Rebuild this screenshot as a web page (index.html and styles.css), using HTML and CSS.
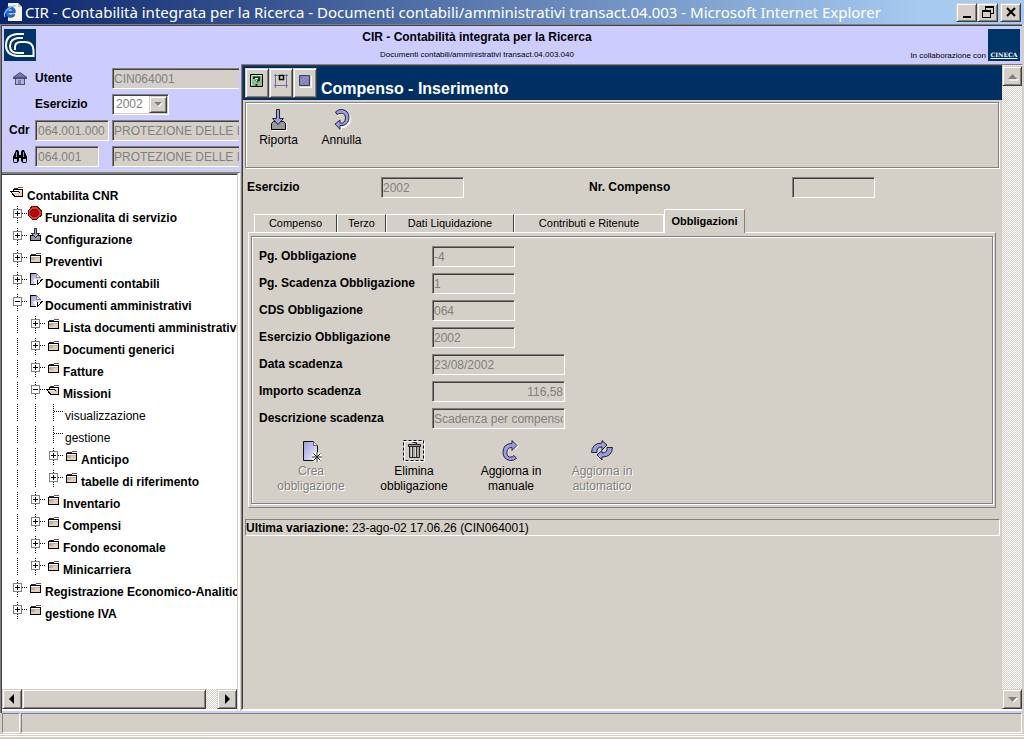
FILE: index.html
```html
<!DOCTYPE html>
<html lang="it">
<head>
<meta charset="utf-8">
<title>CIR - Contabilità integrata per la Ricerca</title>
<link rel="stylesheet" href="styles.css">
</head>
<body>
<svg class="defs" aria-hidden="true">
  <defs>
    <linearGradient id="sheet" x1="0" y1="0" x2="1" y2="1"><stop offset="0" stop-color="#9a9ade"/><stop offset="1" stop-color="#f4f4ff"/></linearGradient>
    <symbol id="line" viewBox="0 0 18 22"><path d="M8.500 0v17" stroke="#000" stroke-dasharray="1 1"/></symbol>
    <symbol id="leaf" viewBox="0 0 18 22"><path d="M8.500 0v17M9 7.500h9" stroke="#000" stroke-dasharray="1 1"/></symbol>
    <symbol id="plus" viewBox="0 0 18 22"><path d="M8.500 0v17M13 7.500h5" stroke="#000" stroke-dasharray="1 1"/><path d="M4.500 3.500h8v8h-8z" fill="#fff" stroke="#808080"/><path d="M6 7.500h5M8.500 5v5" stroke="#000"/></symbol>
    <symbol id="minus" viewBox="0 0 18 22"><path d="M8.500 0v17M13 7.500h5" stroke="#000" stroke-dasharray="1 1"/><path d="M4.500 3.500h8v8h-8z" fill="#fff" stroke="#808080"/><path d="M6 7.500h5" stroke="#000"/></symbol>
    <symbol id="folder" viewBox="0 0 18 22"><path d="M3 5h11v8H3z" fill="#000"/><path d="M4 6h9v6H4z" fill="#e8cdb4"/><path d="M4 8h4v2H4zM4 7h9v1H4z" fill="#b8b0a8"/><path d="M4 6h9v1H4zM9 4h5v1H9z" fill="#fff"/><path d="M4 4h5v1H4z" fill="#303030"/><path d="M9 3h5v1H9z" fill="#804848"/></symbol>
    <symbol id="open" viewBox="0 0 18 22"><path d="M4 5h10v8H5L1 7h3z" fill="#000"/><path d="M3 8h7l3 4H6zM5 6h8v5h-1l-2-4H5z" fill="#e8cdb4"/><path d="M3 8h6v1H4zM5 6h8v1H5z" fill="#fff"/><path d="M5 4h4v1H5z" fill="#303030"/><path d="M9 3h5v1H9z" fill="#804848"/></symbol>
    <symbol id="stop" viewBox="0 0 18 22"><path d="M5 .5h5l4 4v5l-4 3.500H5L1.500 9.500v-5z" fill="#d84040" stroke="#601010"/><path d="M5.500 3.500h4l2 2v3l-2 2h-4l-2-2v-3z" fill="#b80808" stroke="#900"/></symbol>
    <symbol id="config" viewBox="0 0 18 22"><path d="M3.500 7.500h10v5h-10z" fill="#999" stroke="#000"/><path d="M7.500.5h2v5h3l-4 4-4-4h3z" fill="#a4a4e4" stroke="#334"/></symbol>
    <symbol id="doc" viewBox="0 0 18 22"><path d="M3.500 1.500h6l4 4v7h-10z" fill="url(#sheet)"/><path d="M10 1.500H3.500v11H10" fill="none" stroke="#000"/><path d="M9.500 1.500v4h4z" fill="#fff" stroke="#888"/><path d="M7.500 7.500l3 4.500M16 6l-5.500 6.500" fill="none" stroke="#fff" stroke-width="3"/><path d="M10.500 7.500v5l5-5.500" fill="none" stroke="#000"/></symbol>
  </defs>
</svg>
<div class="window">
  <header class="titlebar">
    <svg class="ie" width="20" height="20" viewBox="0 0 20 20"><path d="M5 1h10l4 4v14H5z" fill="#f4f4e8"/><path d="M15 1v4h4" fill="#c8c8b8"/><path d="M2.500 10a5 4.500 0 1 1 9.500 1H5q1 3 4 1.500h3Q11 16 7 15.500 2.500 15 2.500 10M5 9h4.500Q9 7 7.200 7T5 9" fill="#2468d8" stroke="#0a3c9c" stroke-width=".5"/><path d="M2 15Q0 11 5 7t8-3" fill="none" stroke="#7cc4f8" stroke-width="1.200"/></svg>
    <span class="title">CIR - Contabilità integrata per la Ricerca - Documenti contabili/amministrativi transact.04.003 - Microsoft Internet Explorer</span>
    <button class="raised ctl" aria-label="Riduci a icona"><svg width="16" height="14"><path d="M4 11h8v2H4z"/></svg></button>
    <button class="raised ctl" aria-label="Ripristina"><svg width="16" height="14"><path d="M5 1h9v8h-3V8h2V3H6v2H5zM2 5h9v8H2zM3 7v5h7V7z" fill-rule="evenodd"/></svg></button>
    <button class="raised ctl close" aria-label="Chiudi"><svg width="16" height="14"><path d="M4 3l8 8M12 3l-8 8" stroke="#000" stroke-width="2"/></svg></button>
  </header>
  <div class="client">
    <div class="banner">
      <svg width="32" height="32" viewBox="0 0 32 32"><path fill="#036" d="M0 0h32v32H0z"/><g fill="none" stroke="#fff" stroke-width="2"><path d="M20 5h-7Q2 6 2 16t11 11h17"/><path d="M19 9h-5Q6 10 6 17t8 7h6"/><path d="M11 21v-3q0-5 6-5h4q8 0 8.500 8v7"/></g></svg>
      <div class="banner-text"><strong>CIR - Contabilità integrata per la Ricerca</strong><small>Documenti contabili/amministrativi transact.04.003.040</small></div>
      <div class="partner"><small>In collaborazione con</small><span class="cineca">CINECA</span></div>
    </div>
    <div class="frames">
      <aside class="side">
        <form class="user">
          <button type="button" class="mini" aria-label="Home"><svg width="16" height="16" viewBox="0 0 16 16"><path d="M8 1l7 5v2h-2v6H3V8H1V6z" fill="#505078"/><path d="M8 2l5 4H3z" fill="#7878b0"/><path d="M4 8h8v5H4z" fill="#b0b0dc"/><path d="M6 9h3v4H6z" fill="#8080b0"/></svg></button>
          <label for="utente">Utente</label><input id="utente" value="CIN064001" disabled>
          <label class="second" for="anno">Esercizio</label>
          <span class="combo"><select id="anno" disabled><option>2002</option></select><svg class="raised" width="18" height="17"><path d="M5 6h8l-4 4z" fill="#fff"/><path d="M4 5h8L8 9z" fill="#808080"/></svg></span>
          <label for="cdr">Cdr</label><input id="cdr" class="code" value="064.001.000" disabled><input aria-label="Descrizione Cdr" value="PROTEZIONE DELLE I" disabled>
          <button type="button" class="mini" aria-label="Cerca"><svg width="16" height="16" viewBox="0 0 16 16"><path d="M4 1h2l1 2v3h2V3l1-2h2l3 7v4l-1 2h-3l-2-2V9H7v3l-2 2H2l-1-2V8z" fill="#000"/><path d="M2 10h3v3H2zM11 10h3v3h-3z" fill="#c8c8e8"/><path d="M4.500 3v5M11.500 3v5" stroke="#999"/></svg></button>
          <input class="short" aria-label="Unità" value="064.001" disabled><input aria-label="Descrizione unità" value="PROTEZIONE DELLE I" disabled>
        </form>
        <nav class="tree-frame">
          <ul class="tree">
            <li><svg><use href="#open"/></svg><a href="#">Contabilita CNR</a></li>
            <li><svg><use href="#plus"/></svg><svg><use href="#stop"/></svg><a href="#">Funzionalita di servizio</a></li>
            <li><svg><use href="#plus"/></svg><svg><use href="#config"/></svg><a href="#">Configurazione</a></li>
            <li><svg><use href="#plus"/></svg><svg><use href="#folder"/></svg><a href="#">Preventivi</a></li>
            <li><svg><use href="#plus"/></svg><svg><use href="#doc"/></svg><a href="#">Documenti contabili</a></li>
            <li><svg><use href="#minus"/></svg><svg><use href="#doc"/></svg><a href="#">Documenti amministrativi</a></li>
            <li><svg><use href="#line"/></svg><svg><use href="#plus"/></svg><svg><use href="#folder"/></svg><a href="#">Lista documenti amministrativi</a></li>
            <li><svg><use href="#line"/></svg><svg><use href="#plus"/></svg><svg><use href="#folder"/></svg><a href="#">Documenti generici</a></li>
            <li><svg><use href="#line"/></svg><svg><use href="#plus"/></svg><svg><use href="#folder"/></svg><a href="#">Fatture</a></li>
            <li><svg><use href="#line"/></svg><svg><use href="#minus"/></svg><svg><use href="#open"/></svg><a href="#">Missioni</a></li>
            <li><svg><use href="#line"/></svg><svg><use href="#line"/></svg><svg><use href="#leaf"/></svg><a class="leaf" href="#">visualizzazione</a></li>
            <li><svg><use href="#line"/></svg><svg><use href="#line"/></svg><svg><use href="#leaf"/></svg><a class="leaf" href="#">gestione</a></li>
            <li><svg><use href="#line"/></svg><svg><use href="#line"/></svg><svg><use href="#plus"/></svg><svg><use href="#folder"/></svg><a href="#">Anticipo</a></li>
            <li><svg><use href="#line"/></svg><svg><use href="#line"/></svg><svg><use href="#plus"/></svg><svg><use href="#folder"/></svg><a href="#">tabelle di riferimento</a></li>
            <li><svg><use href="#line"/></svg><svg><use href="#plus"/></svg><svg><use href="#folder"/></svg><a href="#">Inventario</a></li>
            <li><svg><use href="#line"/></svg><svg><use href="#plus"/></svg><svg><use href="#folder"/></svg><a href="#">Compensi</a></li>
            <li><svg><use href="#line"/></svg><svg><use href="#plus"/></svg><svg><use href="#folder"/></svg><a href="#">Fondo economale</a></li>
            <li><svg><use href="#line"/></svg><svg><use href="#plus"/></svg><svg><use href="#folder"/></svg><a href="#">Minicarriera</a></li>
            <li><svg><use href="#plus"/></svg><svg><use href="#folder"/></svg><a href="#">Registrazione Economico-Analitica</a></li>
            <li><svg><use href="#plus"/></svg><svg><use href="#folder"/></svg><a href="#">gestione IVA</a></li>
          </ul>
          <div class="hscroll">
            <button class="raised" aria-label="Scorri a sinistra"><svg width="14" height="14"><path d="M9 2v10L4 7z"/></svg></button>
            <span class="raised thumb"></span>
            <button class="raised" aria-label="Scorri a destra"><svg width="14" height="14"><path d="M5 2v10l5-5z"/></svg></button>
          </div>
        </nav>
      </aside>
      <main class="main">
        <div class="page">
          <div class="page-head">
            <button class="raised" aria-label="Guida"><svg width="16" height="16"><path d="M1.500 1.500h12v12h-12z" fill="#8cbc8c" stroke="#000"/><path d="M3 2.500h10M2.500 3v10" stroke="#c8ecc8"/><path d="M5 6V4.500h5V7L7.500 8v2M7.500 11v2" fill="none" stroke="#163c16" stroke-width="2"/><path d="M6 5.500h3M8 7l-1 1v2" fill="none" stroke="#fff"/></svg></button>
            <button class="raised" aria-label="Layout"><svg width="16" height="16"><path d="M1 2.500h14M1 12.500h14M2.500 1v14M13.500 1v14" stroke="#7070a8"/><path d="M6.500 2.500h4v4h-4z" fill="#ddd" stroke="#000" stroke-width="1.500"/></svg></button>
            <button class="raised" aria-label="Finestra"><svg width="16" height="16"><path d="M2.500 2.500h10v10h-10z" fill="#8080b8" stroke="#404070"/><path d="M4 8l4-4M4 11l7-7M8 11l3-3" stroke="#a8a8d8"/><path d="M14.500 3v11.500H3" stroke="#fff" fill="none"/></svg></button>
            <h1>Compenso - Inserimento</h1>
          </div>
          <div class="toolbar etched">
            <button class="tool"><svg width="22" height="24" viewBox="0 0 22 24"><path d="M3.500 15.500l2-2h10l2 2v6h-14z" fill="#999" stroke="#000"/><path d="M4 22.500h14.500V15" fill="none" stroke="#fff"/><path d="M8.500 1.500h3v9h4l-5.500 6-5.500-6h4z" fill="#a0a0dc" stroke="#223"/></svg>Riporta</button>
            <button class="tool"><svg width="22" height="24" viewBox="0 0 22 24"><path d="M4.500 4.500q3-3 7-2.500 7 1.500 7 8T12 18.500H9v3.500l-5-5.500 5-4v3.500h3q3.500-.5 3.500-5.500t-4-5Q8 5 6 6.500z" fill="#fff" stroke="#fff" transform="translate(1 1)"/><path d="M4.500 4q3-3 7-2.500 6.500 1.500 6.500 8T12 17.500H9v4l-5-5.500 5-4v3h2.500q3-.5 3-5t-4-4.500Q8 5 6 6.500z" fill="#9c9cd8" stroke="#224"/></svg>Annulla</button>
          </div>
          <div class="keys">
            <label for="ese">Esercizio</label><input id="ese" value="2002" disabled>
            <label for="nr">Nr. Compenso</label><input id="nr" disabled>
          </div>
          <div class="tabs" role="tablist">
            <button role="tab" class="t-compenso">Compenso</button><button role="tab" class="t-terzo">Terzo</button><button role="tab" class="t-dati">Dati Liquidazione</button><button role="tab" class="t-contributi">Contributi e Ritenute</button><button role="tab" class="active" aria-selected="true">Obbligazioni</button>
          </div>
          <section class="panel">
            <div class="etched inner">
              <div class="fields">
                <label for="f1">Pg. Obbligazione</label><input id="f1" value="-4" disabled>
                <label for="f2">Pg. Scadenza Obbligazione</label><input id="f2" value="1" disabled>
                <label for="f3">CDS Obbligazione</label><input id="f3" value="064" disabled>
                <label for="f4">Esercizio Obbligazione</label><input id="f4" value="2002" disabled>
                <label for="f5">Data scadenza</label><input id="f5" class="wide" value="23/08/2002" disabled>
                <label for="f6">Importo scadenza</label><input id="f6" class="wide num" value="116,58" disabled>
                <label for="f7">Descrizione scadenza</label><input id="f7" class="wide" value="Scadenza per compenso" disabled>
              </div>
              <div class="actions">
                <button class="tool" disabled><svg width="22" height="24" viewBox="0 0 22 24"><path d="M3.500 2.500h10l4 4v15h-14z" fill="url(#sheet)" stroke="#111"/><path d="M13.500 2.500v4h4" fill="#fff" stroke="#666"/><path d="M17 13v10M12 18h10M13.500 14.500l7 7M20.500 14.500l-7 7" stroke="#fff" stroke-width="3"/><path d="M17 13v10M12 18h10M13.500 14.500l7 7M20.500 14.500l-7 7" stroke="#222"/></svg>Crea obbligazione</button>
                <button class="tool"><svg width="22" height="24" viewBox="0 0 22 24"><path d="M1.500 2.500h20v20h-20z" fill="none" stroke="#fff"/><path d="M.5 1.500h20v20H.5z" fill="none" stroke="#000" stroke-dasharray="3 2"/><path d="M6.500 7.500h10v11h-10z" fill="#aaa" stroke="#222"/><path d="M9.500 8v10M13.500 8v10" stroke="#333"/><path d="M8.500 8v10M12.500 8v10" stroke="#ddd"/><path d="M5.500 5.500h12v2h-12zM9.500 3.500h4v2" fill="#999" stroke="#222"/></svg>Elimina obbligazione</button>
                <button class="tool"><svg width="22" height="24" viewBox="0 0 22 24"><path d="M16 20q-3 3-7 2-6-2-6-8Q3 5 12 5V2l6 5-6 5V9q-5 0-5 5t5 4h3z" fill="#fff" transform="translate(1 0)"/><path d="M16.500 19.500q-3 2.500-7 2-6.500-2-6.500-8Q3 4.500 12 4.500V1.500l5 5-5 5v-3q-5 0-5 5t4 4.500q2 0 3-1.500z" fill="#9c9cd8" stroke="#224"/></svg>Aggiorna in manuale</button>
                <button class="tool" disabled><svg width="22" height="24" viewBox="0 0 22 24"><g fill="#9c9cd8" stroke="#224"><path d="M.5 13.500Q1 4 11 4V1.500l5 4.500-5 5V8q-6 0-5 5.500z"/><path d="M21.500 8.500Q21 18 11 18v3l-5-5 5-4.500V14q6 0 5-5.500z"/></g></svg>Aggiorna in automatico</button>
              </div>
            </div>
          </section>
          <p class="last"><strong>Ultima variazione:</strong> 23-ago-02 17.06.26 (CIN064001)</p>
        </div>
        <div class="vscroll">
          <button class="raised" aria-label="Scorri in alto"><svg width="16" height="16"><path d="M5 12h9v-1" stroke="#fff" fill="none"/><path d="M4 11h9L8.500 6z" fill="#808080"/></svg></button>
          <button class="raised" aria-label="Scorri in basso"><svg width="16" height="16"><path d="M5 7h9l-4.500 5z" fill="#fff"/><path d="M4 6h9l-4.500 5z" fill="#808080"/></svg></button>
        </div>
      </main>
    </div>
  </div>
  <footer class="status"><span></span><span></span></footer>
</div>
</body>
</html>
```
FILE: styles.css
```css
* { box-sizing: border-box; }
body {
  margin: 0;
  background: #d4d0c8;
  color: #000;
  font: 12px/15px "Liberation Sans", Arial, sans-serif;
}
svg { display: block; flex: none; }
button, input, select { font: inherit; color: inherit; margin: 0; }
button { padding: 0; background: #d4d0c8; }
small { font-size: 8px; line-height: 10px; }
.defs { position: absolute; width: 0; height: 0; }

.window { display: flex; flex-direction: column; min-height: 100vh; }

.raised {
  display: flex;
  align-items: center;
  justify-content: center;
  flex: none;
  border: 1px solid;
  border-color: #d4d0c8 #404040 #404040 #d4d0c8;
  background: #d4d0c8;
  box-shadow: inset 1px 1px #fff, inset -1px -1px #808080;
}

/* Title bar */
.titlebar {
  display: flex;
  align-items: center;
  height: 24px;
  padding: 0 3px;
  background: linear-gradient(90deg, #0a246a, #a6caf0 90%);
}
.title {
  flex: 1;
  min-width: 0;
  margin-left: 2px;
  overflow: hidden;
  color: #fff;
  font: 15px/22px "Noto Sans", Tahoma, sans-serif;
  white-space: nowrap;
}
.ctl { width: 21px; height: 19px; }
.close { margin-left: 2px; }

/* Client area */
.client {
  display: flex;
  flex: 1;
  flex-direction: column;
  margin-right: 2px;
  padding-bottom: 2px;
  border-top: 1px solid #808080;
  border-left: 1px solid #808080;
  background: #ccf;
  box-shadow: inset 1px 1px #404040;
}
.banner {
  display: grid;
  grid-template-columns: 40px 1fr 110px;
  align-items: center;
  height: 39px;
  padding: 1px 2px 0 3px;
}
.banner-text { display: grid; justify-items: center; gap: 5px; }
.partner { display: flex; align-items: flex-end; justify-content: flex-end; gap: 2px; }
.partner small { white-space: nowrap; }
.cineca {
  display: flex;
  align-items: flex-end;
  justify-content: center;
  width: 32px;
  height: 32px;
  padding-bottom: 1px;
  background: #036;
  color: #fff;
  font: bold 6px/10px "DejaVu Serif", serif;
  text-decoration: underline;
}
.frames { display: flex; flex: 1; }

/* Left column */
.side { display: flex; flex-direction: column; width: 240px; padding-left: 1px; }
input {
  width: 83px;
  height: 21px;
  padding: 0 1px;
  border: 1px solid;
  border-color: #808080 #fff #fff #808080;
  border-radius: 0;
  background: #d4d0c8;
  box-shadow: inset 1px 1px #404040;
}
input:disabled { color: #808080; }
label { font-weight: bold; white-space: nowrap; }
.user {
  display: grid;
  grid-template-columns: 26px 77px 1fr;
  grid-auto-rows: 21px;
  gap: 5px 0;
  align-items: center;
  margin-right: 2px;
  padding: 4px 0 5px 7px;
  overflow: hidden;
}
.user input { width: 180px; padding-left: 1px; }
.user .code { width: 74px; padding: 0 1px 0 2px; }
.user .short { width: 64px; padding-left: 2px; }
.user .second { grid-column: 2; }
.mini {
  display: grid;
  place-items: center;
  width: 22px;
  height: 21px;
  border: 1px solid #d4d0dc;
  background: #ccf;
}
.combo { position: relative; width: 57px; height: 21px; }
.combo select {
  width: 57px;
  height: 21px;
  padding: 0 3px;
  appearance: none;
  border: 1px solid;
  border-color: #808080 #fff #fff #808080;
  border-radius: 0;
  background: #fff;
  box-shadow: inset 1px 1px #404040, inset -1px -1px #d4d0c8;
  color: #808080;
  opacity: 1;
}
.combo svg { position: absolute; top: 2px; right: 2px; }

.tree-frame {
  display: flex;
  flex: 1;
  flex-direction: column;
  justify-content: space-between;
  min-width: 0;
  border-top: 2px solid #808080;
  border-right: 4px double #d4d0c8;
  background: #fff;
  box-shadow: inset 0 1px #404040, 0 -1px #d4d0c8;
}
.tree {
  margin: 0;
  padding: 10px 0 0 7px;
  overflow: hidden;
  list-style: none;
}
.tree li { display: flex; height: 22px; }
.tree svg { width: 18px; height: 22px; shape-rendering: crispEdges; }
.tree a {
  color: #000;
  font-weight: bold;
  line-height: 24px;
  text-decoration: none;
  white-space: nowrap;
}
.tree .leaf { padding-left: 2px; font-weight: normal; }

.hscroll, .vscroll {
  background: repeating-conic-gradient(#fff 0 25%, #d4d0c8 0 50%) 0 0 / 2px 2px;
}
.hscroll { display: flex; height: 20px; margin-bottom: 2px; }
.hscroll button { width: 20px; }
.thumb { width: 184px; margin-right: auto; }

/* Main frame */
.main {
  display: flex;
  flex: 1;
  min-width: 0;
  border: solid;
  border-width: 1px 0 2px 1px;
  border-color: #808080 #fff #fff #808080;
  background: #d4d0c8;
  box-shadow: inset 1px 1px #404040;
}
.page { flex: 1; min-width: 0; padding: 1px 0 0 1px; }
.page-head {
  display: flex;
  align-items: center;
  height: 34px;
  padding-left: 2px;
  background: #003063;
}
.page-head button { width: 24px; height: 30px; padding-bottom: 4px; }
h1 {
  margin: 0 0 0 4px;
  padding-top: 12px;
  color: #fff;
  font-size: 16px;
  line-height: 20px;
}
.etched {
  border: 1px solid #808080;
  box-shadow: inset 1px 1px #fff, 1px 1px #fff;
}
.toolbar {
  display: flex;
  height: 66px;
  margin: 2px 3px 0 2px;
  padding: 5px 1px;
}
.toolbar .tool { width: 63px; }
.tool {
  display: flex;
  flex-direction: column;
  align-items: center;
  gap: 1px;
  border: 0;
}
.tool:disabled { color: #808080; text-shadow: 1px 1px #fff; }
.keys {
  display: grid;
  grid-template-columns: 134px 208px 203px 1fr;
  align-items: center;
  padding: 9px 4px;
}
.tabs {
  display: flex;
  align-items: flex-end;
  margin: 2px 6px 0 11px;
}
.tabs button {
  height: 18px;
  border: solid;
  border-width: 1px 1px 0;
  border-color: #fff #404040 #fff #fff;
  font-size: 11px;
}
.tabs .t-compenso { width: 83px; }
.tabs .t-terzo { width: 49px; }
.tabs .t-dati { width: 128px; }
.tabs .t-contributi { width: 150px; border-right-color: #fff; }
.tabs .active {
  position: relative;
  width: 81px;
  height: 24px;
  margin-bottom: -1px;
  border-right-color: #808080;
  font-weight: bold;
}
.panel {
  margin: 0 6px 0 5px;
  padding: 3px 2px 3px;
  border: 1px solid;
  border-color: #fff #808080 #808080 #fff;
}
.inner { padding: 9px 7px; }
.fields {
  display: grid;
  grid-template-columns: 173px 1fr;
  grid-auto-rows: 21px;
  gap: 6px 0;
  align-items: center;
}
.fields .wide { width: 133px; }
.num { text-align: right; }
.actions {
  display: grid;
  grid-template-columns: 104px 102px 92px 90px;
  margin-top: 10px;
}
.actions .tool { padding: 0 10px; }
.last {
  height: 17px;
  margin: 11px 2px 0;
  border: 1px solid;
  border-color: #808080 #fff #fff #808080;
  line-height: 16px;
}
.vscroll { display: flex; flex-direction: column; justify-content: space-between; width: 20px; padding-top: 1px; }
.vscroll button { width: 20px; height: 20px; }

/* Status bar */
.status {
  display: flex;
  gap: 1px;
  height: 26px;
  padding: 0 2px 6px;
  background: linear-gradient(#d4d0c8 21px, #fff 0 22px, #d4d0c8 0 23px, #fff 0 24px, #d4d0c8 0);
}
.status span {
  flex: 1;
  border: 1px solid;
  border-color: #808080 #fff #fff #808080;
}
.status span:first-child { flex: none; width: 18px; }
```
